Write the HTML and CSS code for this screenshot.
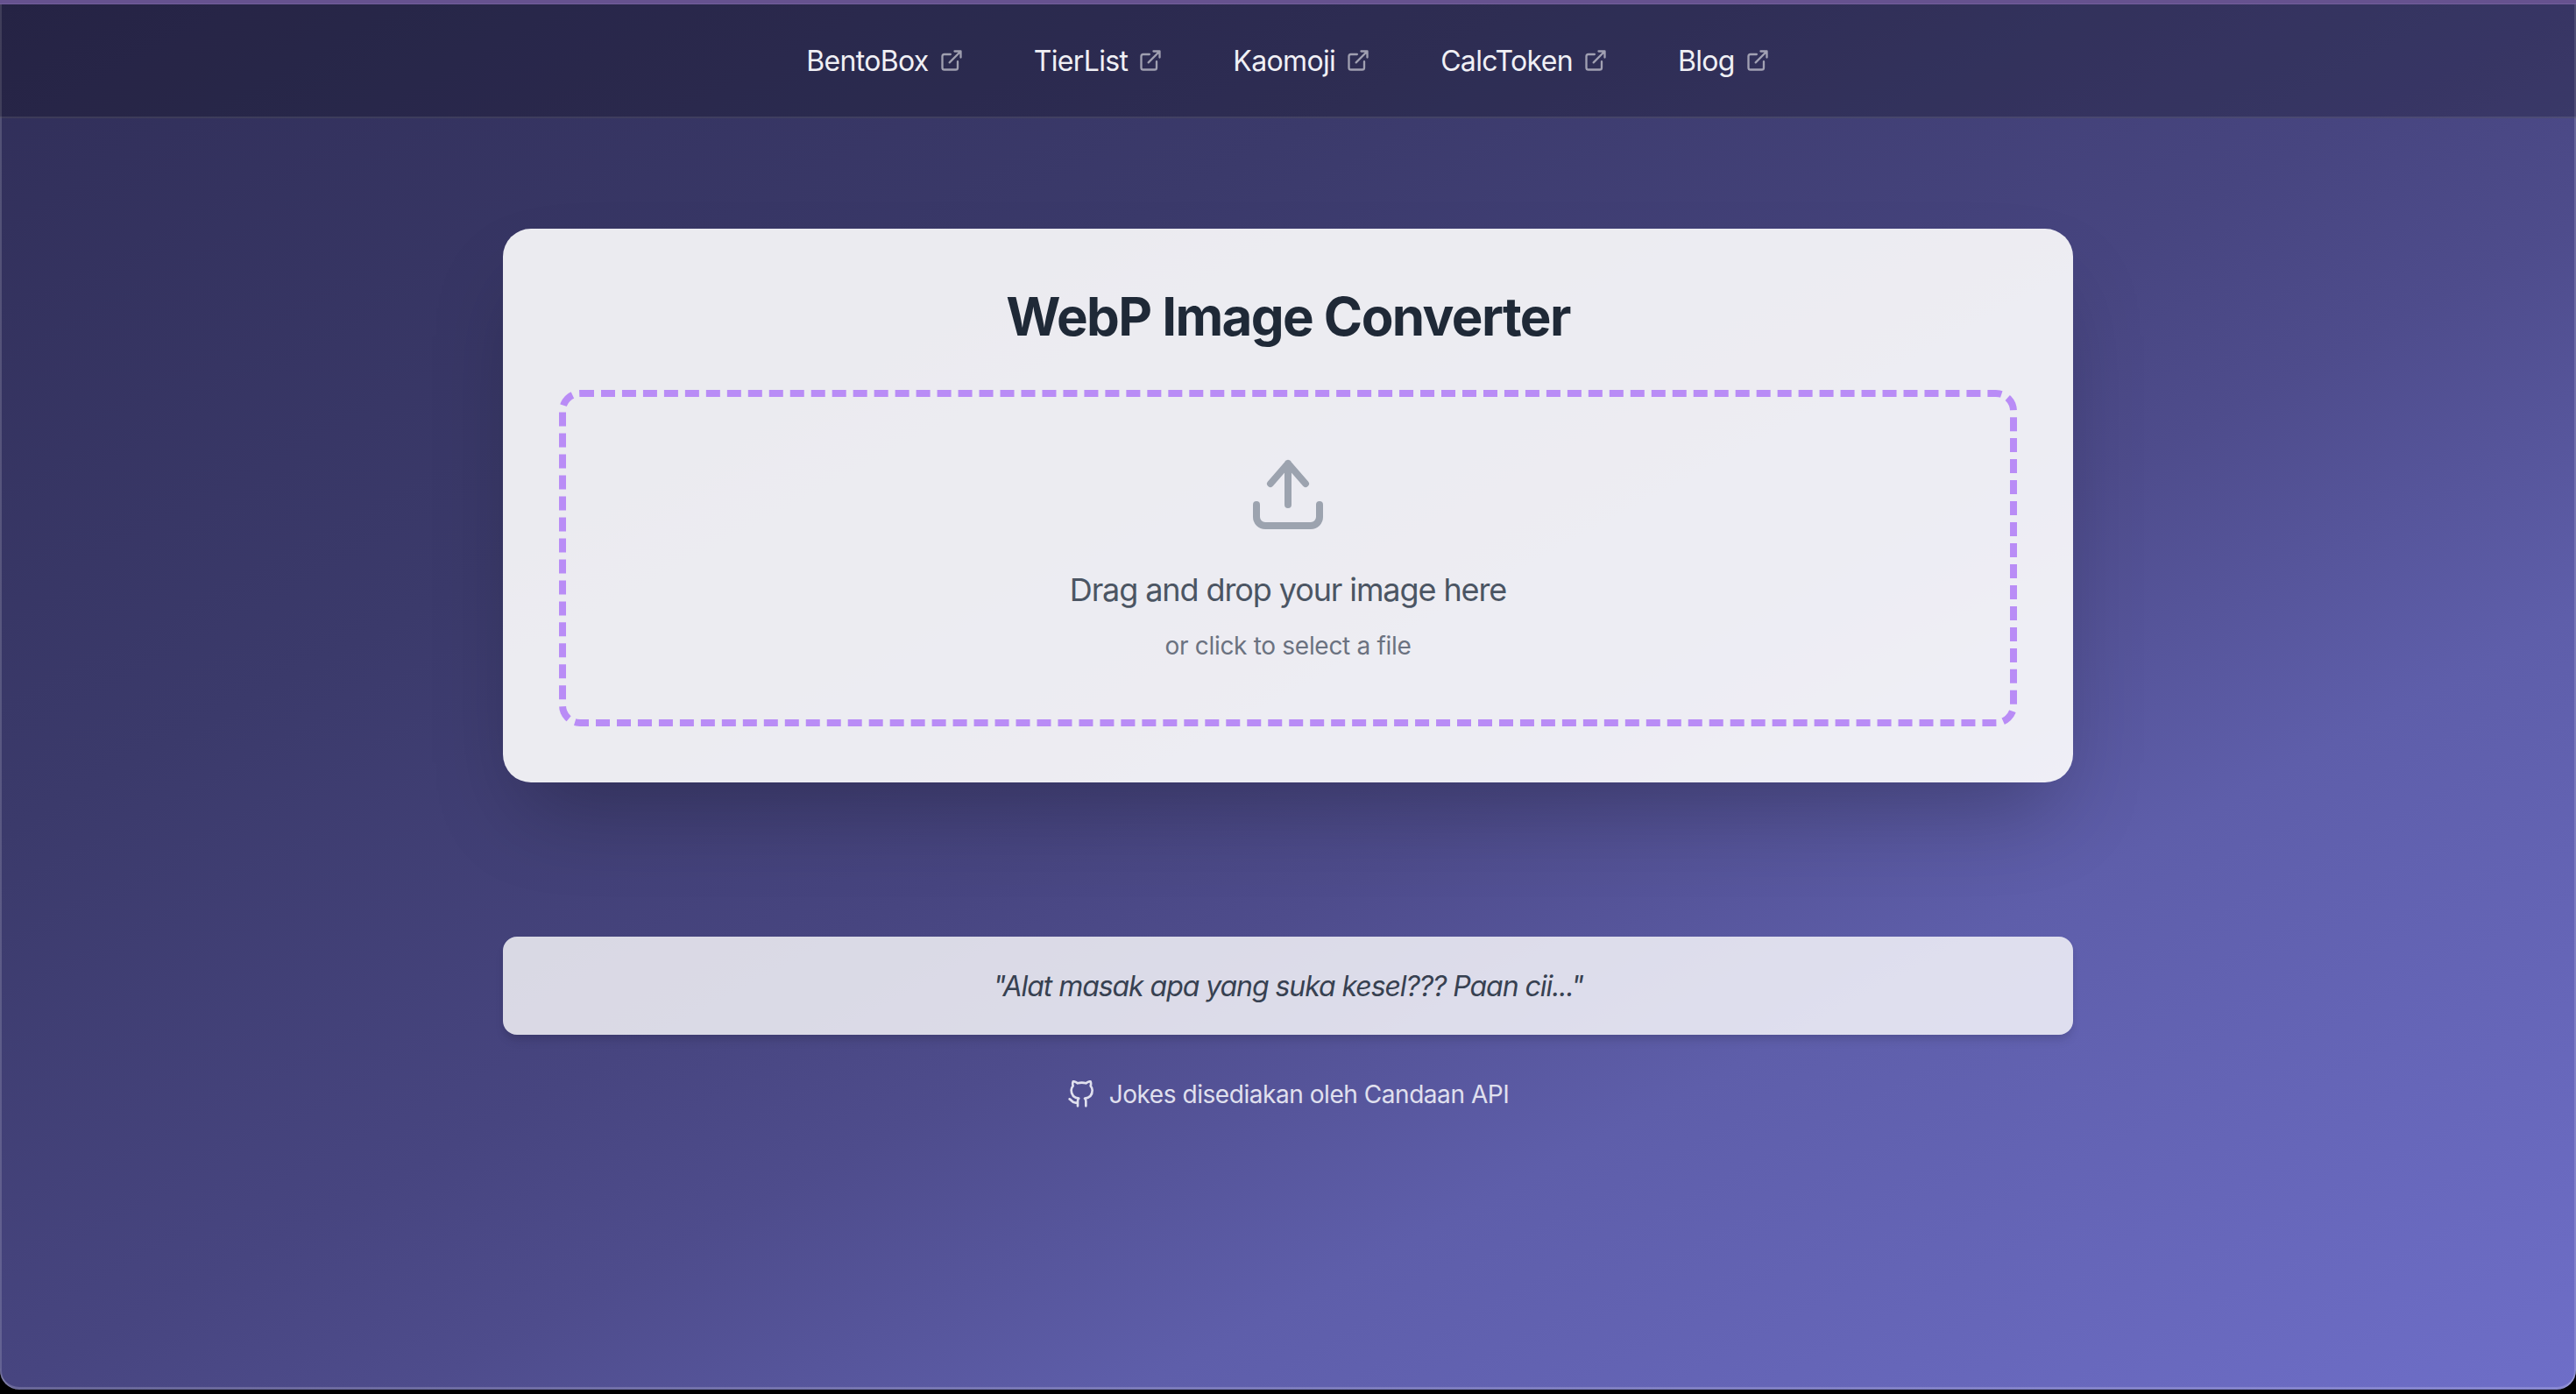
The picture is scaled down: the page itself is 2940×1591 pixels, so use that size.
FILE: index.html
```html
<!DOCTYPE html>
<html lang="en">
<head>
<meta charset="utf-8">
<title>WebP Image Converter</title>
<link rel="stylesheet" href="styles.css">
</head>
<body>
<div class="window">
  <div class="titlebar"></div>
  <nav class="nav">
    <a class="nav-link" href="#">BentoBox<svg class="ext" viewBox="0 0 24 24"><path d="M18 13v6a2 2 0 0 1-2 2H5a2 2 0 0 1-2-2V8a2 2 0 0 1 2-2h6M15 3h6v6M10 14 21 3"/></svg></a>
    <a class="nav-link" href="#">TierList<svg class="ext" viewBox="0 0 24 24"><path d="M18 13v6a2 2 0 0 1-2 2H5a2 2 0 0 1-2-2V8a2 2 0 0 1 2-2h6M15 3h6v6M10 14 21 3"/></svg></a>
    <a class="nav-link" href="#">Kaomoji<svg class="ext" viewBox="0 0 24 24"><path d="M18 13v6a2 2 0 0 1-2 2H5a2 2 0 0 1-2-2V8a2 2 0 0 1 2-2h6M15 3h6v6M10 14 21 3"/></svg></a>
    <a class="nav-link" href="#">CalcToken<svg class="ext" viewBox="0 0 24 24"><path d="M18 13v6a2 2 0 0 1-2 2H5a2 2 0 0 1-2-2V8a2 2 0 0 1 2-2h6M15 3h6v6M10 14 21 3"/></svg></a>
    <a class="nav-link" href="#">Blog<svg class="ext" viewBox="0 0 24 24"><path d="M18 13v6a2 2 0 0 1-2 2H5a2 2 0 0 1-2-2V8a2 2 0 0 1 2-2h6M15 3h6v6M10 14 21 3"/></svg></a>
  </nav>
  <main class="main">
    <section class="card">
      <h1 class="title">WebP Image Converter</h1>
      <div class="drop">
        <svg class="upload" viewBox="0 0 80 80"><path d="M4 52v14a10 10 0 0 0 10 10h52a10 10 0 0 0 10-10V52M40 52V5M20 28 40 5l20 23"/></svg>
        <p class="drop-main">Drag and drop your image here</p>
        <p class="drop-sub">or click to select a file</p>
      </div>
    </section>
    <section class="joke"><p class="joke-text">"Alat masak apa yang suka kesel??? Paan cii..."</p></section>
    <a class="credit" href="#"><svg class="gh" viewBox="0 0 24 24"><path d="M9 19c-5 1.5-5-2.5-7-3m14 6v-3.87a3.37 3.37 0 0 0-.94-2.61c3.14-.35 6.44-1.54 6.44-7A5.44 5.44 0 0 0 20 4.77 5.07 5.07 0 0 0 19.91 1S18.73.65 16 2.48a13.38 13.38 0 0 0-7 0C6.27.65 5.09 1 5.09 1A5.07 5.07 0 0 0 5 4.77a5.44 5.44 0 0 0-1.5 3.75c0 5.42 3.3 6.61 6.44 7A3.37 3.37 0 0 0 9 18.13V22"/></svg><span>Jokes disediakan oleh Candaan API</span></a>
  </main>
</div>
</body>
</html>
```
FILE: styles.css
```css
* { box-sizing: border-box; }
html, body { margin: 0; height: 100%; }
body {
  background: #000;
  font-family: Inter, "Liberation Sans", sans-serif;
  overflow: hidden;
}
.window {
  height: 1586px;
  display: flex;
  flex-direction: column;
  overflow: hidden;
  border-radius: 0 0 22px 22px;
  background: linear-gradient(to bottom right, #302e58, #3b3a6b 30%, #474580 50%, #4e4c8c 58%, #5e5eaa 72%, #6e6ec8);
  box-shadow: inset 2px 0 0 rgba(255,255,255,.16), inset -2px 0 0 rgba(255,255,255,.16), inset 0 -3px 0 rgba(255,255,255,.18);
}
.titlebar {
  height: 5px;
  flex: none;
  background: #66528f;
  border-bottom: 1px solid #735f9c;
}
.nav {
  flex: none;
  height: 130px;
  display: flex;
  justify-content: center;
  align-items: center;
  gap: 80px;
  background: rgba(0,0,0,.22);
  border-bottom: 2px solid rgba(255,255,255,.1);
}
.nav-link {
  display: flex;
  align-items: center;
  gap: 12px;
  color: #f0f0f5;
  font-size: 32px;
  font-weight: 400;
  letter-spacing: -.65px;
  text-decoration: none;
}
.ext {
  width: 28px;
  height: 28px;
  fill: none;
  stroke: rgba(255,255,255,.55);
  stroke-width: 2;
  stroke-linecap: round;
  stroke-linejoin: round;
}
.main {
  width: 1792px;
  margin: 0 auto;
  padding-top: 126px;
  display: flex;
  flex-direction: column;
  align-items: center;
}
.card {
  width: 100%;
  padding: 64px;
  border-radius: 32px;
  background: rgba(255,255,255,.9);
  box-shadow: 0 50px 100px -24px rgba(0,0,0,.25);
}
.title {
  margin: 0 0 48px;
  text-align: center;
  color: #1f2937;
  font-size: 60px;
  line-height: 72px;
  font-weight: 700;
  letter-spacing: -1.6px;
}
.drop {
  height: 384px;
  padding-top: 71px;
  border: 8px dashed #b98cf6;
  border-radius: 24px;
  display: flex;
  flex-direction: column;
  align-items: center;
}
.upload {
  width: 80px;
  height: 80px;
  fill: none;
  stroke: #9ca3af;
  stroke-width: 8;
  stroke-linecap: round;
  stroke-linejoin: round;
}
.drop-main {
  margin: 41px 0 0;
  color: #4b5563;
  font-size: 36px;
  line-height: 56px;
  letter-spacing: -1.1px;
}
.drop-sub {
  margin: 16px 0 0;
  color: #6b7280;
  font-size: 28px;
  line-height: 40px;
  letter-spacing: -.3px;
}
.joke {
  width: 100%;
  height: 112px;
  margin-top: 176px;
  border-radius: 16px;
  background: rgba(255,255,255,.8);
  box-shadow: 0 8px 12px -2px rgba(0,0,0,.1), 0 4px 8px -2px rgba(0,0,0,.06);
  display: flex;
  align-items: center;
  justify-content: center;
}
.joke-text {
  margin: 0;
  color: #374151;
  font-size: 32px;
  font-style: italic;
  letter-spacing: -1.06px;
}
.credit {
  margin-top: 48px;
  display: flex;
  align-items: center;
  gap: 16px;
  color: #e0e0ee;
  font-size: 28px;
  line-height: 40px;
  letter-spacing: -.45px;
  text-decoration: none;
}
.gh {
  width: 32px;
  height: 32px;
  fill: none;
  stroke: currentColor;
  stroke-width: 2;
  stroke-linecap: round;
  stroke-linejoin: round;
}
```
